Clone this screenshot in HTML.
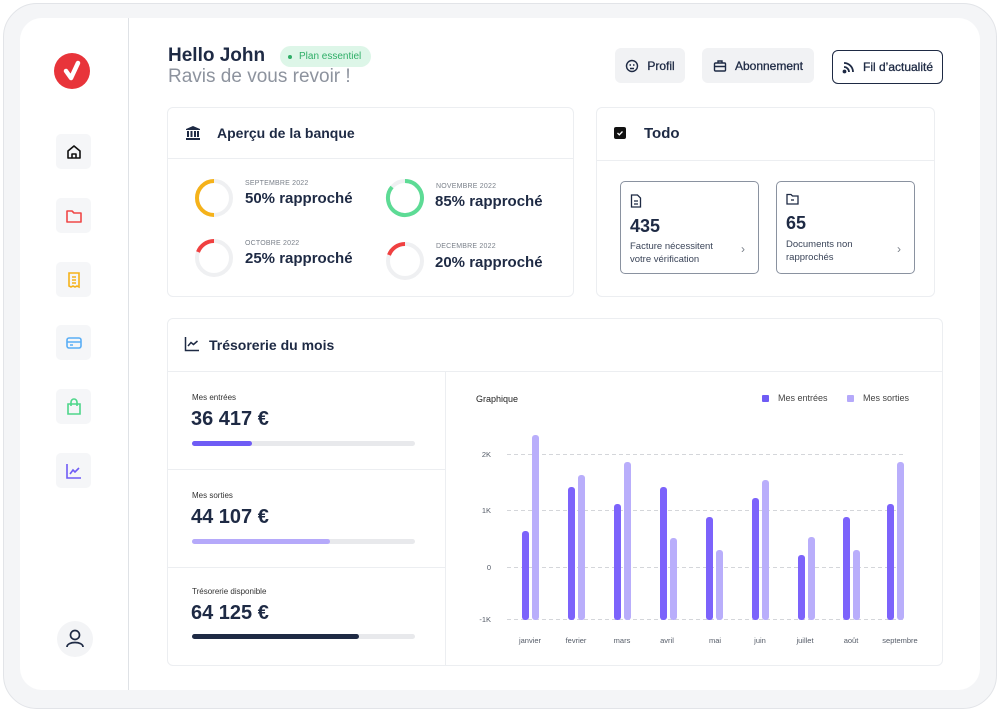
<!DOCTYPE html>
<html><head><meta charset="utf-8"><style>
*{margin:0;padding:0;box-sizing:border-box}
body{width:1000px;height:712px;background:#fff;font-family:"Liberation Sans",sans-serif;color:#1e2a44;position:relative;overflow:hidden}
.a{position:absolute}
.frame{left:3px;top:3px;width:994px;height:706px;border-radius:34px;background:#f4f5f7;border:1px solid #e2e4e8}
.inner{left:20px;top:18px;width:960px;height:672px;border-radius:22px;background:#fff}
.card{background:#fff;border:1px solid #eceef1;border-radius:6px}
.sb{width:35px;height:35px;border-radius:5px;background:#f5f6f8;left:56px;display:flex;align-items:center;justify-content:center}
.btn{height:35px;border-radius:6px;background:#f1f2f4;display:flex;align-items:center;justify-content:center;gap:8px;font-size:12px;color:#1e2a44;-webkit-text-stroke:0.3px #1e2a44}
.small{font-size:7px;color:#7a808a;letter-spacing:.2px}
.big{font-size:15px;font-weight:bold;color:#1e2a44}
.bar{height:5px;border-radius:3px;background:#e8e9ec;width:223px;left:192px}
.bar i{display:block;height:5px;border-radius:3px}
</style></head><body>
<div class="a frame"></div>
<div class="a inner"></div>
<div class="a" style="left:128px;top:18px;width:1px;height:672px;background:#dfe2e6"></div>

<div class="a" style="left:54px;top:53px;width:36px;height:36px;border-radius:50%;background:#e8343a"></div>
<svg class="a" style="left:54px;top:53px" width="36" height="36"><path d="M12 18 L17 25 L24 10" stroke="#fff" stroke-width="4.5" fill="none" stroke-linecap="round" stroke-linejoin="round"/></svg>

<div class="a sb" style="top:134px"><svg width="18" height="18" viewBox="0 0 18 18" fill="none" stroke="#111" stroke-width="1.6" stroke-linejoin="round"><path d="M3 8 L9 3 L15 8 V15 H3 Z"/><path d="M7 15 V11 H11 V15"/></svg></div>
<div class="a sb" style="top:198px"><svg width="18" height="18" viewBox="0 0 18 18" fill="none" stroke="#f04848" stroke-width="1.6" stroke-linejoin="round"><path d="M2 4 H7 L9 6 H16 V15 H2 Z"/></svg></div>
<div class="a sb" style="top:262px"><svg width="18" height="18" viewBox="0 0 18 18" fill="none" stroke="#f5b21a" stroke-width="1.6"><path d="M4 2 H14 V16 L12 15 L10 16 L8 15 L6 16 L4 15 Z"/><path d="M7 6H11M7 9H11M7 12H11"/></svg></div>
<div class="a sb" style="top:325px"><svg width="18" height="18" viewBox="0 0 18 18" fill="none" stroke="#5aaef5" stroke-width="1.6"><rect x="2" y="4" width="14" height="10" rx="2"/><path d="M2 8H16M5 11H8"/></svg></div>
<div class="a sb" style="top:389px"><svg width="18" height="18" viewBox="0 0 18 18" fill="none" stroke="#4ed68a" stroke-width="1.6"><path d="M3 6 H15 V16 H3 Z"/><path d="M6 8 V4 A3 3 0 0 1 12 4 V8"/></svg></div>
<div class="a sb" style="top:453px"><svg width="18" height="18" viewBox="0 0 18 18" fill="none" stroke="#6f5cf5" stroke-width="1.6"><path d="M2 2 V16 H16"/><path d="M5 12 L8 8 L10 10 L14 6"/></svg></div>
<div class="a" style="left:57px;top:621px;width:36px;height:36px;border-radius:50%;background:#f3f4f6"></div>
<svg class="a" style="left:57px;top:621px" width="36" height="36" fill="none" stroke="#1e2a44" stroke-width="1.7"><circle cx="18" cy="14" r="4.5"/><path d="M10 26 C10 20 26 20 26 26"/></svg>

<div class="a" style="left:168px;top:45px;font-size:19px;font-weight:bold;color:#1e2a44">Hello John</div>
<div class="a" style="left:280px;top:46px;width:91px;height:21px;border-radius:11px;background:#ddf6e8;font-size:10px;color:#2fae67;display:flex;align-items:center;padding-left:8px;gap:7px"><span style="width:4px;height:4px;border-radius:50%;background:#2fae67"></span>Plan essentiel</div>
<div class="a" style="left:168px;top:66px;font-size:19px;color:#8d939e">Ravis de vous revoir !</div>

<div class="a btn" style="left:615px;top:48px;width:70px">
<svg width="14" height="14" fill="none" stroke="#1e2a44" stroke-width="1.4"><circle cx="7" cy="7" r="5.5"/><path d="M4.5 6H6M8 6H9.5M5 9.5H9"/></svg>Profil</div>
<div class="a btn" style="left:702px;top:48px;width:112px">
<svg width="14" height="14" fill="none" stroke="#1e2a44" stroke-width="1.4"><rect x="1.5" y="4" width="11" height="8" rx="1"/><path d="M5 4V2H9V4M1.5 7.5H12.5"/></svg>Abonnement</div>
<div class="a btn" style="left:832px;top:50px;width:111px;height:34px;background:#fff;border:1px solid #1e2a44">
<svg width="13" height="13" fill="none" stroke="#1e2a44" stroke-width="1.8"><path d="M2 2 A9 9 0 0 1 11 11"/><path d="M2 6 A5 5 0 0 1 7 11"/><circle cx="2.5" cy="10.5" r="1" fill="#1e2a44"/></svg>Fil d’actualité</div>

<div class="a card" style="left:167px;top:107px;width:407px;height:190px"></div>
<div class="a" style="left:168px;top:158px;width:405px;height:1px;background:#eceef1"></div>
<svg class="a" style="left:185px;top:125px" width="16" height="16" fill="#1e2a44"><path d="M8 1 L15 4 V5 H1 V4 Z"/><rect x="2" y="6" width="2" height="6"/><rect x="5.5" y="6" width="2" height="6"/><rect x="9" y="6" width="2" height="6"/><rect x="12" y="6" width="2" height="6"/><rect x="1" y="13" width="14" height="2"/></svg>
<div class="a" style="left:217px;top:125px;font-size:14px;font-weight:bold">Aperçu de la banque</div>

<svg class="a" style="left:194px;top:178px" width="40" height="40" fill="none" stroke-width="4"><circle cx="20" cy="20" r="17" stroke="#eff0f2"/><path d="M20 3 A17 17 0 0 0 20 37" stroke="#f5b21a"/></svg>
<div class="a small" style="left:245px;top:180px">SEPTEMBRE 2022</div><div class="a big" style="left:245px;top:190px">50% rapproché</div>
<svg class="a" style="left:385px;top:178px" width="40" height="40" fill="none" stroke-width="4"><circle cx="20" cy="20" r="17" stroke="#eff0f2"/><path d="M20 3 A17 17 0 1 1 7 9" stroke="#5ddb95"/></svg>
<div class="a small" style="left:436px;top:183px">NOVEMBRE 2022</div><div class="a big" style="left:435px;top:193px">85% rapproché</div>
<svg class="a" style="left:194px;top:238px" width="40" height="40" fill="none" stroke-width="4"><circle cx="20" cy="20" r="17" stroke="#eff0f2"/><path d="M4 14 A17 17 0 0 1 20 3" stroke="#f04040"/></svg>
<div class="a small" style="left:245px;top:240px">OCTOBRE 2022</div><div class="a big" style="left:245px;top:250px">25% rapproché</div>
<svg class="a" style="left:385px;top:241px" width="40" height="40" fill="none" stroke-width="4"><circle cx="20" cy="20" r="17" stroke="#eff0f2"/><path d="M4 14 A17 17 0 0 1 20 3" stroke="#f04040"/></svg>
<div class="a small" style="left:436px;top:243px">DECEMBRE 2022</div><div class="a big" style="left:435px;top:254px">20% rapproché</div>

<div class="a card" style="left:596px;top:107px;width:339px;height:190px"></div>
<div class="a" style="left:597px;top:160px;width:337px;height:1px;background:#eceef1"></div>
<div class="a" style="left:614px;top:127px;width:12px;height:12px;border-radius:2px;background:#111"></div>
<svg class="a" style="left:614px;top:127px" width="12" height="12" fill="none" stroke="#fff" stroke-width="1.3"><path d="M3.5 6 L5.3 7.8 L8.5 4.5"/></svg>
<div class="a" style="left:644px;top:125px;font-size:15px;font-weight:bold">Todo</div>
<div class="a" style="left:620px;top:181px;width:139px;height:93px;border:1px solid #8a92a0;border-radius:5px"></div>
<svg class="a" style="left:630px;top:194px" width="12" height="14" fill="none" stroke="#1e2a44" stroke-width="1.3"><path d="M1.5 1 H7.5 L10.5 4 V13 H1.5 Z"/><path d="M4 7H8M4 10H8"/></svg>
<div class="a" style="left:630px;top:216px;font-size:18px;font-weight:bold">435</div>
<div class="a" style="left:630px;top:240px;font-size:9.5px;line-height:13px;color:#3a4458">Facture nécessitent<br>votre vérification</div>
<div class="a" style="left:741px;top:242px;font-size:12px;color:#7a808a">›</div>
<div class="a" style="left:776px;top:181px;width:139px;height:93px;border:1px solid #8a92a0;border-radius:5px"></div>
<svg class="a" style="left:786px;top:193px" width="13" height="12" fill="none" stroke="#1e2a44" stroke-width="1.3"><path d="M1 1.5 H5 L6.5 3 H12 V11 H1 Z"/><path d="M5 7H8"/></svg>
<div class="a" style="left:786px;top:213px;font-size:18px;font-weight:bold">65</div>
<div class="a" style="left:786px;top:238px;font-size:9.5px;line-height:13px;color:#3a4458">Documents non<br>rapprochés</div>
<div class="a" style="left:897px;top:242px;font-size:12px;color:#7a808a">›</div>

<div class="a card" style="left:167px;top:318px;width:776px;height:348px"></div>
<div class="a" style="left:168px;top:371px;width:774px;height:1px;background:#eceef1"></div>
<div class="a" style="left:445px;top:372px;width:1px;height:293px;background:#eceef1"></div>
<div class="a" style="left:168px;top:469px;width:277px;height:1px;background:#eceef1"></div>
<div class="a" style="left:168px;top:567px;width:277px;height:1px;background:#eceef1"></div>
<svg class="a" style="left:184px;top:336px" width="16" height="16" fill="none" stroke="#1e2a44" stroke-width="1.5"><path d="M1.5 1 V14.5 H15"/><path d="M4 10 L7 6.5 L9.5 8.5 L13.5 5"/></svg>
<div class="a" style="left:209px;top:337px;font-size:14px;font-weight:bold">Trésorerie du mois</div>

<div class="a" style="left:192px;top:393px;font-size:8px;color:#333">Mes entrées</div>
<div class="a" style="left:191px;top:408px;font-size:20px;font-weight:bold">36 417 €</div>
<div class="a bar" style="top:441px"><i style="width:60px;background:#6f5cf5"></i></div>
<div class="a" style="left:192px;top:491px;font-size:8px;color:#333">Mes sorties</div>
<div class="a" style="left:191px;top:506px;font-size:20px;font-weight:bold">44 107 €</div>
<div class="a bar" style="top:539px"><i style="width:138px;background:#b5a9fa"></i></div>
<div class="a" style="left:192px;top:587px;font-size:8px;color:#333">Trésorerie disponible</div>
<div class="a" style="left:191px;top:602px;font-size:20px;font-weight:bold">64 125 €</div>
<div class="a bar" style="top:634px"><i style="width:167px;background:#1e2a44"></i></div>

<div class="a" style="left:476px;top:394px;font-size:9px;color:#222">Graphique</div>
<div class="a" style="left:762px;top:395px;width:7px;height:7px;border-radius:1px;background:#6f5cf5"></div>
<div class="a" style="left:778px;top:393px;font-size:9px;color:#444">Mes entrées</div>
<div class="a" style="left:847px;top:395px;width:7px;height:7px;border-radius:1px;background:#b5a9fa"></div>
<div class="a" style="left:863px;top:393px;font-size:9px;color:#444">Mes sorties</div>

<svg class="a" style="left:440px;top:420px" width="500" height="240">
<g stroke="#d4d6da" stroke-dasharray="4 3" stroke-width="1">
<line x1="67" y1="34.5" x2="464" y2="34.5"/><line x1="67" y1="90.5" x2="464" y2="90.5"/><line x1="67" y1="147.5" x2="464" y2="147.5"/><line x1="67" y1="199.5" x2="464" y2="199.5"/></g>
<g font-family="Liberation Sans" font-size="7.5" fill="#555c68" text-anchor="end">
<text x="51" y="37">2K</text><text x="51" y="93">1K</text><text x="51" y="150">0</text><text x="51" y="202">-1K</text></g>
<g fill="#7c63fb">
<rect x="82" y="111" width="7" height="89" rx="3"/><rect x="128" y="67" width="7" height="133" rx="3"/><rect x="174" y="84" width="7" height="116" rx="3"/><rect x="220" y="67" width="7" height="133" rx="3"/><rect x="266" y="97" width="7" height="103" rx="3"/><rect x="312" y="78" width="7" height="122" rx="3"/><rect x="358" y="135" width="7" height="65" rx="3"/><rect x="403" y="97" width="7" height="103" rx="3"/><rect x="447" y="84" width="7" height="116" rx="3"/></g>
<g fill="#b9aefb">
<rect x="92" y="15" width="7" height="185" rx="3"/><rect x="138" y="55" width="7" height="145" rx="3"/><rect x="184" y="42" width="7" height="158" rx="3"/><rect x="230" y="118" width="7" height="82" rx="3"/><rect x="276" y="130" width="7" height="70" rx="3"/><rect x="322" y="60" width="7" height="140" rx="3"/><rect x="368" y="117" width="7" height="83" rx="3"/><rect x="413" y="130" width="7" height="70" rx="3"/><rect x="457" y="42" width="7" height="158" rx="3"/></g>
<g font-family="Liberation Sans" font-size="7.5" fill="#555c68" text-anchor="middle">
<text x="90" y="223">janvier</text><text x="136" y="223">fevrier</text><text x="182" y="223">mars</text><text x="227" y="223">avril</text><text x="275" y="223">mai</text><text x="320" y="223">juin</text><text x="365" y="223">juillet</text><text x="411" y="223">août</text><text x="460" y="223">septembre</text></g>
</svg>
</body></html>
